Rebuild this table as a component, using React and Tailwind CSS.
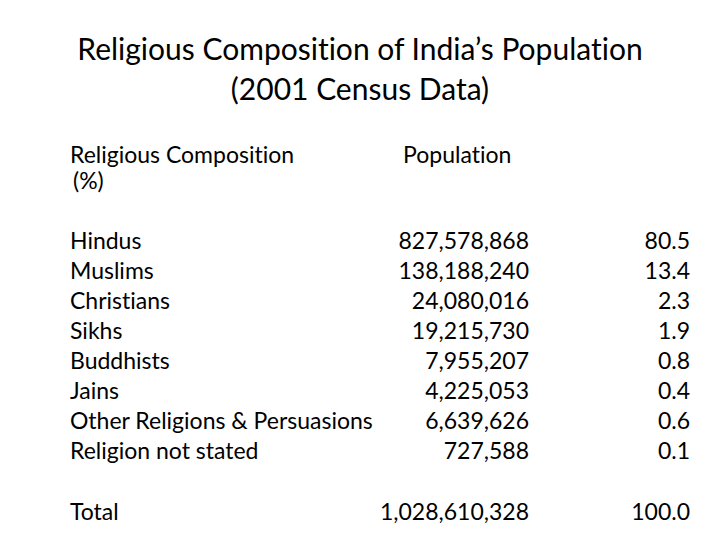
import React from 'react'

const rows = [
    ['Hindus', '827,578,868', '80.5'],
    ['Muslims', '138,188,240', '13.4'],
    ['Christians', '24,080,016', '2.3'],
    ['Sikhs', '19,215,730', '1.9'],
    ['Buddhists', '7,955,207', '0.8'],
    ['Jains', '4,225,053', '0.4'],
    ['Other Religions & Persuasions', '6,639,626', '0.6'],
    ['Religion not stated', '727,588', '0.1'],
]

const Row = ({ label, pop, pct }) => (
    <div className="flex whitespace-nowrap">
        <div className="w-[333px]">{label}</div>
        <div className="w-[126px] flex justify-end">{pop}</div>
        <div className="w-[161px] flex justify-end">{pct}</div>
    </div>
)

const App = () => {
    return (
        <div className="w-[720px] h-[540px] bg-white text-black overflow-hidden [font-variant-ligatures:none]" style={{ fontFamily: 'Lato, "Open Sans", sans-serif' }}>
            <header className="pt-[28px] text-center text-[30px] leading-[40px]">
                <h1>Religious Composition of India’s Population</h1>
                <h1>(2001 Census Data)</h1>
            </header>

            <main className="pl-[70px] text-[23px]">
                <div className="flex mt-[33px] leading-[26px]">
                    <div className="w-[333px]">
                        <div>Religious Composition</div>
                        <div className="pl-[3px]">(%)</div>
                    </div>
                    <div>Population</div>
                </div>

                <div className="mt-[32px] leading-[30px]">
                    {rows.map(r => (
                        <Row key={r[0]} label={r[0]} pop={r[1]} pct={r[2]} />
                    ))}
                </div>

                <div className="mt-[31px] leading-[30px]">
                    <Row label="Total" pop="1,028,610,328" pct="100.0" />
                </div>
            </main>
        </div>
    )
}

export default App
